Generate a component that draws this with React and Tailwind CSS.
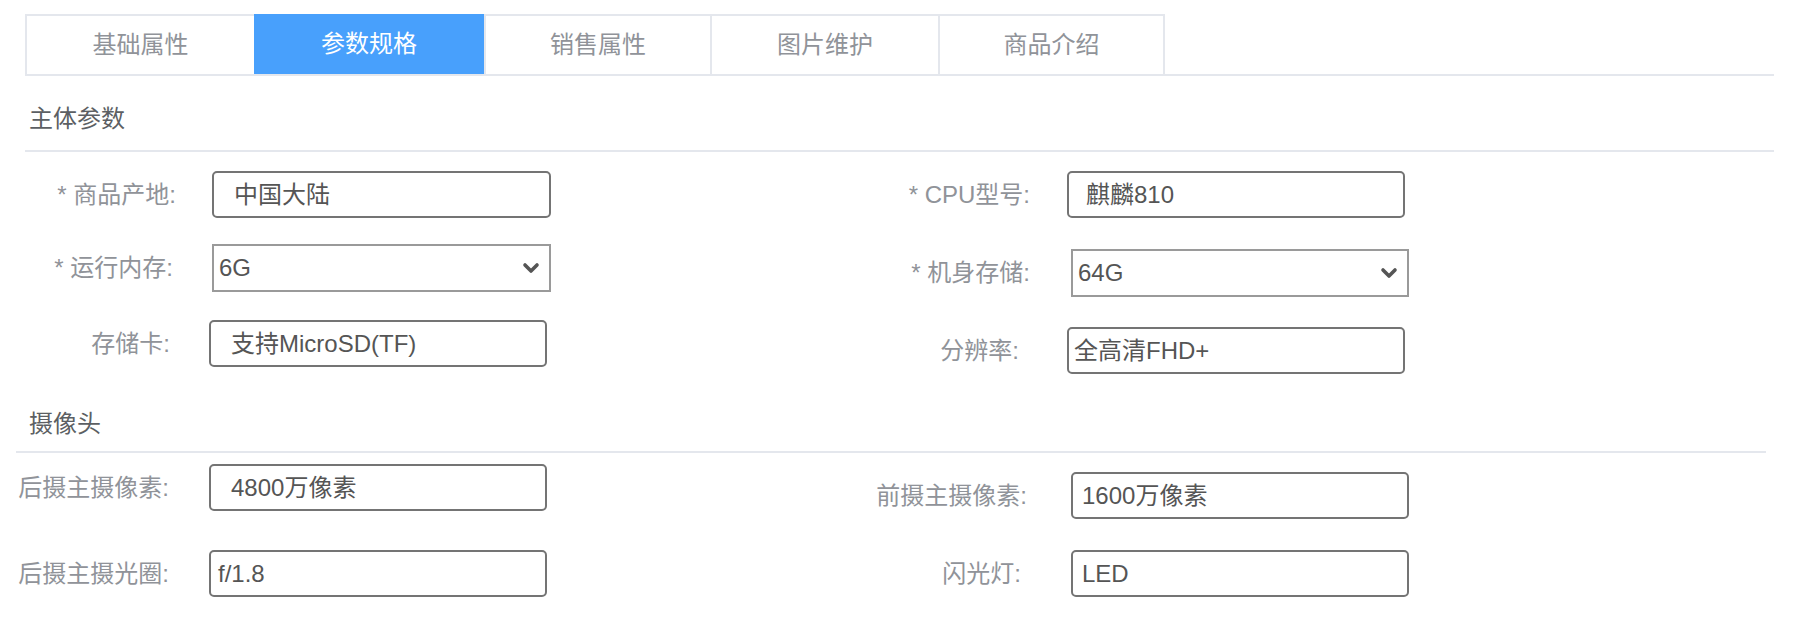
import React from 'react';

const tabs = [
  { name: '基础属性', w: 'w-[229px]' },
  { name: '参数规格', w: 'w-[230px]' },
  { name: '销售属性', w: 'w-[226px]' },
  { name: '图片维护', w: 'w-[228px]' },
  { name: '商品介绍', w: 'w-[227px]' },
];

const Chevron = () => (
  <svg width="20" height="14" viewBox="0 0 20 14" className="mr-[8px]">
    <path d="M4 4 L10 10 L16 4" fill="none" stroke="#555" strokeWidth="3.6" strokeLinecap="round" strokeLinejoin="round" />
  </svg>
);

const Field = ({ label, value, labelCls, boxCls, select, padCls = 'pl-[20px]' }) => (
  <div className="flex items-center">
    <div className={`${labelCls} text-right text-[24px] leading-[32px] text-[#909399] whitespace-nowrap`}>{label}</div>
    {select ? (
      <div className={`${boxCls} h-[48px] border-2 border-[#9a9a9a] bg-white flex items-center justify-between pl-[5px]`}>
        <span className="text-[24px] text-[#555]">{value}</span>
        <Chevron />
      </div>
    ) : (
      <div className={`${boxCls} h-[47px] border-2 border-[#747474] rounded-[5px] bg-white flex items-center ${padCls}`}>
        <span className="text-[24px] text-[#555]">{value}</span>
      </div>
    )}
  </div>
);

export default function App() {
  return (
    <div className="w-[1810px] h-[642px] bg-white pt-[14px] font-['Liberation_Sans','Noto_Sans_CJK_SC',sans-serif] overflow-hidden">
      <div className="ml-[25px] w-[1749px] flex border-b-2 border-[#e4e7ed]">
        {tabs.map((t, i) => (
          <div
            key={t.name}
            className={
              i === 1
                ? `${t.w} h-[60px] flex items-center justify-center bg-[#48a0fc] text-white text-[24px]`
                : `${t.w} h-[60px] flex items-center justify-center border-t-2 border-l-2 last:border-r-2 border-[#e4e7ed] text-[#909399] text-[24px] bg-white`
            }
          >
            {t.name}
          </div>
        ))}
      </div>

      <div className="ml-[25px] w-[1749px] pt-[27px] pb-[15px] border-b-2 border-[#e4e7ed]">
        <div className="pl-[4px] text-[24px] leading-[32px] text-[#5c5f63]">主体参数</div>
      </div>

      <div className="flex items-start mt-[19px]">
        <div className="w-[860px]">
          <Field label="* 商品产地:" value="中国大陆" labelCls="w-[176px]" boxCls="ml-[36px] w-[339px]" />
        </div>
        <Field label="* CPU型号:" value="麒麟810" labelCls="w-[170px]" boxCls="ml-[37px] w-[338px]" padCls="pl-[17px]" />
      </div>

      <div className="flex items-start mt-[26px]">
        <div className="w-[860px]">
          <Field label="* 运行内存:" value="6G" labelCls="w-[173px]" boxCls="ml-[39px] w-[339px]" select />
        </div>
        <div className="mt-[5px]">
          <Field label="* 机身存储:" value="64G" labelCls="w-[170px]" boxCls="ml-[41px] w-[338px]" select />
        </div>
      </div>

      <div className="flex items-start mt-[23px]">
        <div className="w-[860px]">
          <Field label="存储卡:" value="支持MicroSD(TF)" labelCls="w-[170px]" boxCls="ml-[39px] w-[338px]" />
        </div>
        <div className="mt-[7px]">
          <Field label="分辨率:" value="全高清FHD+" labelCls="w-[159px]" boxCls="ml-[48px] w-[338px]" padCls="pl-[5px]" />
        </div>
      </div>

      <div className="ml-[16px] w-[1750px] pt-[34px] pb-[11px] border-b-2 border-[#e4e7ed]">
        <div className="pl-[13px] text-[24px] leading-[32px] text-[#5c5f63]">摄像头</div>
      </div>

      <div className="flex items-start mt-[11px]">
        <div className="w-[860px]">
          <Field label="后摄主摄像素:" value="4800万像素" labelCls="w-[169px]" boxCls="ml-[40px] w-[338px]" />
        </div>
        <div className="mt-[8px]">
          <Field label="前摄主摄像素:" value="1600万像素" labelCls="w-[167px]" boxCls="ml-[44px] w-[338px]" padCls="pl-[9px]" />
        </div>
      </div>

      <div className="flex items-start mt-[31px]">
        <div className="w-[860px]">
          <Field label="后摄主摄光圈:" value="f/1.8" labelCls="w-[169px]" boxCls="ml-[40px] w-[338px]" padCls="pl-[7px]" />
        </div>
        <Field label="闪光灯:" value="LED" labelCls="w-[161px]" boxCls="ml-[50px] w-[338px]" padCls="pl-[9px]" />
      </div>
    </div>
  );
}
